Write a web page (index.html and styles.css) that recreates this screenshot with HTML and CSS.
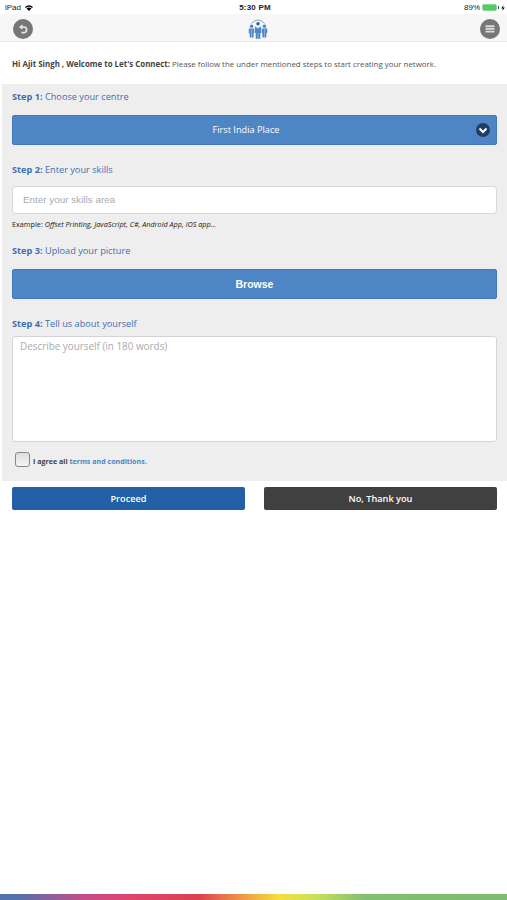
FILE: index.html
```html
<!DOCTYPE html>
<html lang="en">
<head>
    <meta charset="UTF-8">
    <meta name="viewport" content="width=device-width, initial-scale=1.0">
    <title>Let's Connect</title>
    <link rel="stylesheet" href="styles.css">
</head>
<body>

<div class="status-bar">
    <div class="status-left">
        <span>iPad</span>
        <svg class="wifi" viewBox="0 0 16 12" width="8" height="6">
            <path d="M0 4 Q8 -3.500 16 4 L14 6 Q8 0.800 2 6 Z"/>
            <path d="M3 7 Q8 2.500 13 7 L8 12 Z"/>
        </svg>
    </div>
    <span class="status-time">5:30 PM</span>
    <div class="status-right">
        <span>89%</span>
        <span class="battery"></span>
        <span class="battery-tip"></span>
        <svg viewBox="0 0 6 10" width="4" height="6"><path d="M4 0 L0 6 H3 L2 10 L6 4 H3 Z"/></svg>
    </div>
</div>

<header class="navbar">
    <button class="round-btn" aria-label="Back">
        <svg viewBox="0 0 20 20" width="20" height="20">
            <path d="M8 8 H10.800 A2.800 2.800 0 0 1 10.800 13.600 H8.500" fill="none" stroke="#e8e8e8" stroke-width="1.700"/>
            <path d="M6 8 L9.500 5.300 V10.700 Z" fill="#e8e8e8"/>
        </svg>
    </button>
    <svg class="logo" viewBox="0 0 20 20" width="20" height="20">
        <path d="M3.300 4.500 Q10 -2.500 16.700 4.500" fill="none" stroke="#7fa6d3" stroke-width="1"/>
        <circle cx="3.600" cy="7.200" r="1.700"/>
        <circle cx="16.400" cy="7.200" r="1.700"/>
        <circle class="logo-head" cx="10" cy="4.800" r="1.700"/>
        <path d="M0.800 9.600 H6.300 V14.200 H5.600 V18.600 H1.700 V14.200 H0.800 Z"/>
        <path d="M13.700 9.600 H19.200 V14.200 H18.300 V18.600 H14.400 V14.200 H13.700 Z"/>
        <path d="M7 7.300 L10 9.500 L13 7.300 V14 H12.300 V19.700 H7.700 V14 H7 Z"/>
        <path d="M3.600 10 V18.600 M16.400 10 V18.600 M10 14 V19.700" stroke="#f7f7f7" stroke-width="0.400"/>
    </svg>
    <button class="round-btn" aria-label="Menu">
        <svg viewBox="0 0 20 20" width="20" height="20">
            <path d="M5.500 7.200 H14.500 M5.500 9.900 H14.500 M5.500 12.600 H14.500" stroke="#ddd" stroke-width="1.900"/>
        </svg>
    </button>
</header>

<p class="intro"><b>Hi Ajit Singh , Welcome to Let's Connect:</b> <span>Please follow the under mentioned steps to start creating your network.</span></p>

<form>
    <div class="steps">
        <h2 class="step-title"><b>Step 1:</b> <span>Choose your centre</span></h2>
        <button type="button" class="select-btn">
            <span class="select-label">First India Place</span>
            <svg viewBox="0 0 14 14" width="14" height="14">
                <circle cx="7" cy="7" r="7" fill="#1d3f66"/>
                <path d="M3.500 5.500 L7 9 L10.500 5.500" fill="none" stroke="#fff" stroke-width="2"/>
            </svg>
        </button>

        <h2 class="step-title"><b>Step 2:</b> <span>Enter your skills</span></h2>
        <input type="text" class="skills" placeholder="Enter your skills area">
        <p class="example">Example: <i>Offset Printing, JavaScript, C#, Android App, iOS app...</i></p>

        <h2 class="step-title"><b>Step 3:</b> <span>Upload your picture</span></h2>
        <button type="button" class="browse-btn">Browse</button>

        <h2 class="step-title"><b>Step 4:</b> <span>Tell us about yourself</span></h2>
        <textarea class="about" placeholder="Describe yourself (in 180 words)"></textarea>

        <label class="agree">
            <input type="checkbox">
            <span>I agree all <a href="#">terms and conditions.</a></span>
        </label>
    </div>

    <div class="actions">
        <button type="submit" class="proceed">Proceed</button>
        <button type="button" class="decline">No, Thank you</button>
    </div>
</form>

<footer class="rainbow"></footer>

</body>
</html>
```
FILE: styles.css
```css
* {
    box-sizing: border-box;
}

body {
    margin: 0;
    min-height: 100vh;
    display: flex;
    flex-direction: column;
    background-color: #fff;
    font-family: "Open Sans", sans-serif;
    color: #444;
}

button {
    border: 0;
    padding: 0;
    font-family: inherit;
    color: #fff;
}

/* Status bar */
.status-bar {
    height: 14px;
    padding: 1px 2px 0 5px;
    display: grid;
    grid-template-columns: 1fr auto 1fr;
    align-items: center;
    font-family: "Liberation Sans", Arial, sans-serif;
    font-size: 8px;
    color: #222;
}

.status-left, .status-right {
    display: flex;
    align-items: center;
}

.status-left {
    gap: 4px;
}

.status-right {
    justify-content: flex-end;
}

.status-time {
    font-weight: bold;
    letter-spacing: 0.2px;
}

.battery {
    width: 15px;
    height: 7px;
    margin-left: 2px;
    border-radius: 2px;
    background-color: #55cc62;
    border: 1px solid #8cd894;
}

.battery-tip {
    width: 1px;
    height: 3px;
    margin: 0 2px 0 1px;
    background-color: #555;
}

/* Top navigation */
.navbar {
    height: 28px;
    padding: 2px 7px 0 13px;
    display: flex;
    align-items: center;
    justify-content: space-between;
    background-color: #f7f7f7;
    border-bottom: 1px solid #e9e9e9;
}

.round-btn {
    width: 20px;
    height: 20px;
    border-radius: 50%;
    background-color: #777;
}

.round-btn svg {
    display: block;
}

.logo {
    margin-left: 3px;
    fill: #4d85c5;
}

.logo-head {
    fill: #315b8c;
}

.intro {
    height: 42px;
    margin: 0;
    padding: 0 12px;
    line-height: 44px;
    font-size: 7.9px;
    white-space: nowrap;
}

.intro span {
    color: #555;
}

/* Steps */
.steps {
    height: 397px;
    margin-left: 2px;
    padding: 6px 10px 0;
    display: flex;
    flex-direction: column;
    background-color: #eee;
}

.step-title {
    margin: 0;
    height: 14px;
    line-height: 14px;
    font-size: 9.2px;
    font-weight: normal;
    color: #3e70b0;
}

.select-btn, .browse-btn {
    height: 30px;
    flex-shrink: 0;
    border: 1px solid #4278b8;
    border-radius: 2px;
    background-color: #4d85c5;
}

.select-btn {
    margin: 11px 0 18px;
    padding: 0 6px 0 3px;
    display: flex;
    align-items: center;
    font-size: 9.2px;
}

.select-label {
    flex: 1;
    padding-bottom: 2px;
    text-align: center;
}

.skills {
    height: 28px;
    margin-top: 9px;
    padding: 0 10px 2px;
    border: 1px solid #d8d8d8;
    border-radius: 4px;
    font-family: "Liberation Sans", Arial, sans-serif;
    font-size: 9.9px;
}

.skills::placeholder, .about::placeholder {
    color: #aaa;
}

.example {
    margin: 4px 0 13px;
    height: 13px;
    line-height: 13px;
    font-size: 7.25px;
    color: #222;
}

.browse-btn {
    margin: 11px 0 18px;
    font-family: "Liberation Sans", Arial, sans-serif;
    font-size: 10.5px;
    font-weight: bold;
}

.about {
    height: 106px;
    margin-top: 5px;
    padding: 2px 7px;
    border: 1px solid #d4d4d4;
    border-radius: 3px;
    resize: none;
    font-family: "Open Sans", sans-serif;
    font-size: 9.9px;
}

.agree {
    margin-top: 10px;
    padding-left: 3px;
    display: flex;
    align-items: center;
    gap: 3px;
    font-size: 7.1px;
    font-weight: bold;
}

.agree input {
    appearance: none;
    width: 15px;
    height: 15px;
    margin: 0;
    border: 1px solid #888;
    border-radius: 3px;
    background: linear-gradient(#ddd, #f5f5f5);
}

.agree span {
    padding-top: 3px;
}

.agree a {
    color: #4d85c5;
    text-decoration: none;
}

.actions {
    padding: 6px 10px 0 12px;
    display: grid;
    grid-template-columns: 1fr 1fr;
    gap: 19px;
}

.actions button {
    height: 23px;
    border-radius: 2px;
    font-size: 9.2px;
    font-weight: 600;
}

.proceed {
    background-color: #225fa5;
}

.actions .decline {
    background-color: #404040;
}

/* Colour strip along the bottom edge */
.rainbow {
    height: 6px;
    margin-top: auto;
    background: linear-gradient(to right, #5272ad 0, #5272ad 3%, #c74c87 17%, #df4670 25%, #dc4050 39%, #ef9a45 48%, #f6df3c 55%, #c9e05a 62%, #83bf72 72%, #7cbb70 100%);
}
```
